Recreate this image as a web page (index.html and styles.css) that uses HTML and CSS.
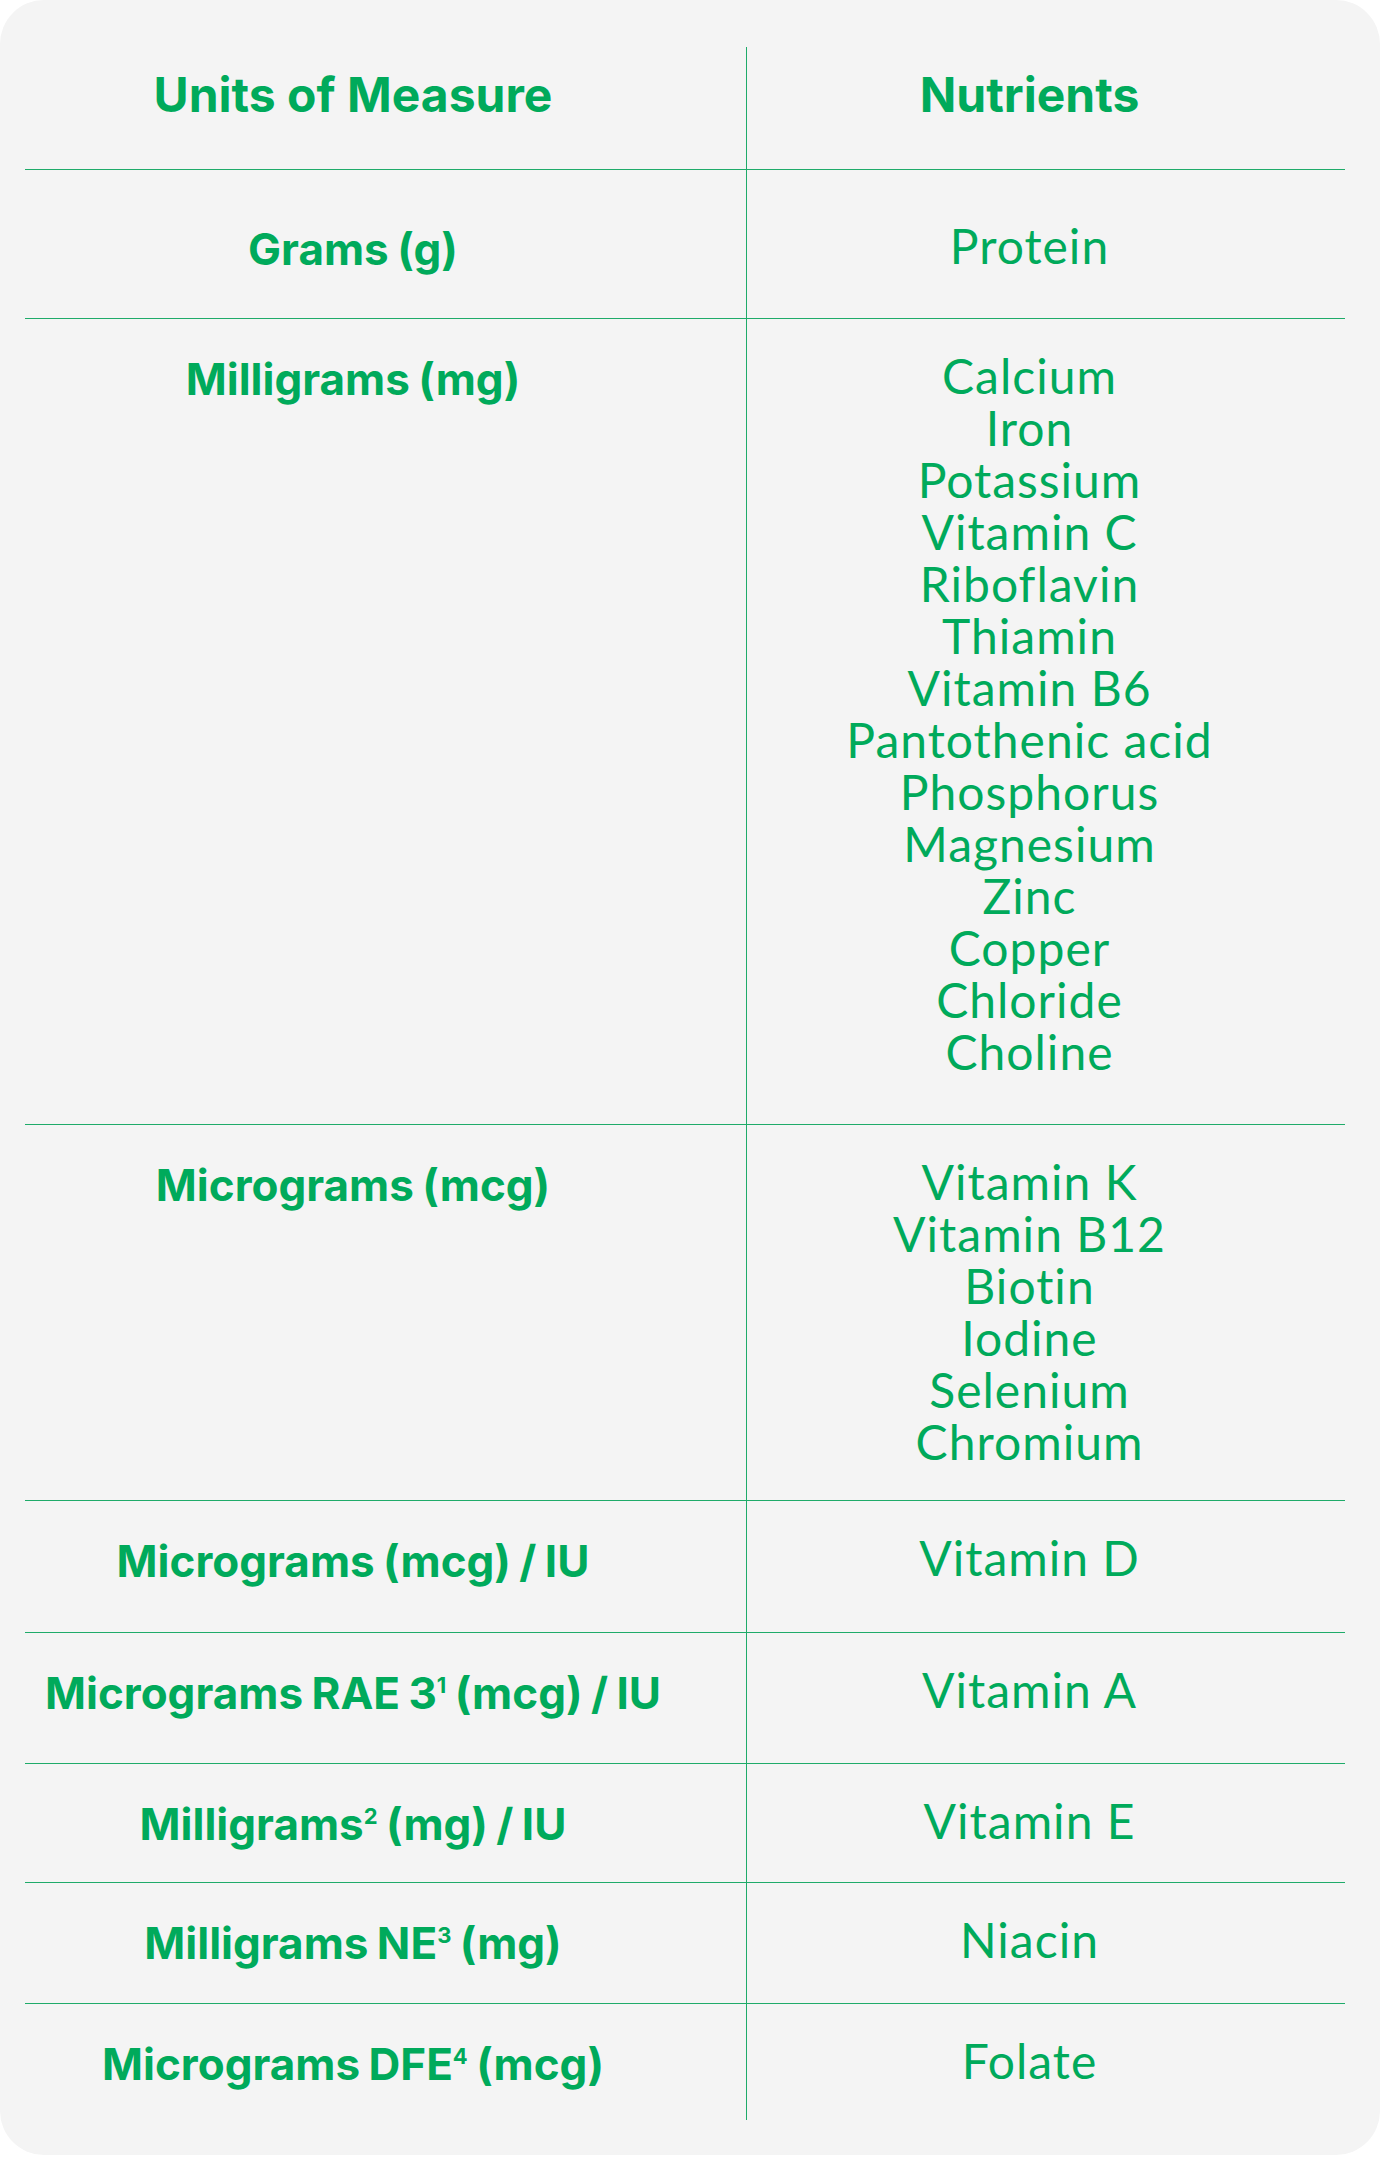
FILE: index.html
```html
<!DOCTYPE html>
<html lang="en">
<head>
<meta charset="utf-8">
<title>Units of Measure</title>
<link rel="stylesheet" href="styles.css">
</head>
<body>
<div class="card">
  <div class="table">
    <div class="row row-head">
      <div class="cell unit head">Units of Measure</div>
      <div class="cell nut head">Nutrients</div>
    </div>
    <div class="row row-1">
      <div class="cell unit">Grams (g)</div>
      <div class="cell nut">Protein</div>
    </div>
    <div class="row row-2">
      <div class="cell unit">Milligrams (mg)</div>
      <div class="cell nut">
        <div>Calcium</div>
        <div>Iron</div>
        <div>Potassium</div>
        <div>Vitamin C</div>
        <div>Riboflavin</div>
        <div>Thiamin</div>
        <div>Vitamin B6</div>
        <div>Pantothenic acid</div>
        <div>Phosphorus</div>
        <div>Magnesium</div>
        <div>Zinc</div>
        <div>Copper</div>
        <div>Chloride</div>
        <div>Choline</div>
      </div>
    </div>
    <div class="row row-3">
      <div class="cell unit">Micrograms (mcg)</div>
      <div class="cell nut">
        <div>Vitamin K</div>
        <div>Vitamin B12</div>
        <div>Biotin</div>
        <div>Iodine</div>
        <div>Selenium</div>
        <div>Chromium</div>
      </div>
    </div>
    <div class="row row-4">
      <div class="cell unit">Micrograms (mcg) / IU</div>
      <div class="cell nut">Vitamin D</div>
    </div>
    <div class="row row-5">
      <div class="cell unit">Micrograms RAE 3<sup class="sup">1</sup> (mcg) / IU</div>
      <div class="cell nut">Vitamin A</div>
    </div>
    <div class="row row-6">
      <div class="cell unit">Milligrams<sup class="sup">2</sup> (mg) / IU</div>
      <div class="cell nut">Vitamin E</div>
    </div>
    <div class="row row-7">
      <div class="cell unit">Milligrams NE<sup class="sup">3</sup> (mg)</div>
      <div class="cell nut">Niacin</div>
    </div>
    <div class="row row-8 row-last">
      <div class="cell unit">Micrograms DFE<sup class="sup">4</sup> (mcg)</div>
      <div class="cell nut">Folate</div>
    </div>
  </div>
</div>
</body>
</html>
```
FILE: styles.css
```css
html, body {
  margin: 0;
  padding: 0;
  background: #ffffff;
}

.card {
  box-sizing: border-box;
  width: 1380px;
  height: 2155px;
  background: #f4f4f4;
  border-radius: 44px;
  padding: 47px 35px 0 25px;
  color: #00aa5b;
}

.table {
  display: flex;
  flex-direction: column;
}

.row {
  box-sizing: border-box;
  display: grid;
  grid-template-columns: 721px 599px;
  border-bottom: 1px solid #1fab69;
}

.row-last {
  border-bottom: none;
}

.cell {
  box-sizing: border-box;
  text-align: center;
  line-height: 52px;
  padding-top: 34px;
  font-variant-ligatures: none;
}

.unit {
  padding-right: 65px;
  font-family: "Inter", "Open Sans", sans-serif;
  font-weight: 700;
  font-size: 44px;
  word-spacing: -2px;
}

.nut {
  border-left: 1px solid #1fab69;
  padding-right: 33px;
  padding-top: 31px;
  font-family: "Lato", "Noto Sans", sans-serif;
  font-weight: 400;
  font-size: 48px;
  letter-spacing: 1px;
}

.row .head {
  font-family: "Inter", "Open Sans", sans-serif;
  font-weight: 700;
  font-size: 48px;
  letter-spacing: 0;
  word-spacing: 0;
  padding-top: 22px;
}

.row-head { height: 123px; }
.row-1 { height: 149px; }
.row-1 .unit { padding-top: 53px; }
.row-1 .nut { padding-top: 50px; }
.row-2 { height: 806px; }
.row-3 { height: 376px; }
.row-4 { height: 132px; }
.row-5 { height: 131px; }
.row-6 { height: 119px; }
.row-7 { height: 121px; }
.row-8 { height: 116px; }

.sup {
  font-size: 0.5em;
  line-height: 0;
  vertical-align: 0.75em;
}
```
